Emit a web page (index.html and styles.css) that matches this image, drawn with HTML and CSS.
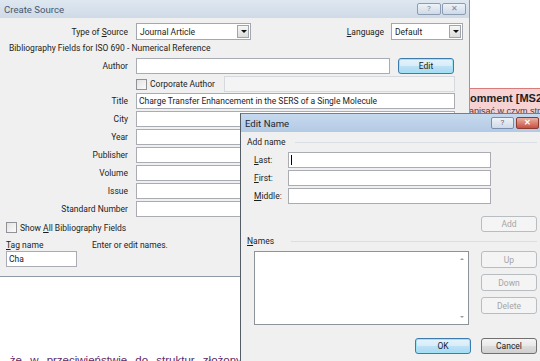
FILE: index.html
```html
<!DOCTYPE html>
<html lang="en">
<head>
  <meta charset="UTF-8">
  <meta name="viewport" content="width=device-width, initial-scale=1.0">
  <title>Create Source</title>
  <link rel="stylesheet" href="styles.css">
</head>
<body>

  <div class="screen">
    <div class="document">
      <div class="comment">
        <div class="comment-head">Comment [MS2]:</div>
        <div class="comment-text">napisać w czym struktura</div>
      </div>
      <p class="doc-line">ę, że w przeciwieństwie do struktur złożonych</p>
    </div>

    <div class="window create-source">
      <div class="titlebar inactive">
        <span class="title">Create Source</span>
        <div class="caption">
          <span class="cap-btn help">?</span>
          <span class="cap-btn close">&#x2715;</span>
        </div>
      </div>

      <div class="win-body">
        <div class="row top-row">
          <span class="field-label">Type of <u>S</u>ource</span>
          <div class="select type-select"><span>Journal Article</span><span class="drop"></span></div>
          <span class="lang-label"><u>L</u>anguage</span>
          <div class="select lang-select"><span>Default</span><span class="drop"></span></div>
        </div>

        <div class="section-title">Bibliography Fields for ISO 690 - Numerical Reference</div>

        <div class="row field-row">
          <span class="field-label">Author</span>
          <input class="text-input author-input" type="text" value="">
          <button class="btn default edit-btn">Edit</button>
        </div>
        <div class="row field-row">
          <span class="field-label"></span>
          <span class="checkbox"></span>
          <span class="check-text">Corporate Author</span>
          <input class="text-input corp-input" type="text" value="" disabled>
        </div>
        <div class="row field-row title-row">
          <span class="field-label">Title</span>
          <input class="text-input wide-input" type="text" value="Charge Transfer Enhancement in the SERS of a Single Molecule">
        </div>
        <div class="row field-row">
          <span class="field-label">City</span>
          <input class="text-input wide-input" type="text" value="">
        </div>
        <div class="row field-row">
          <span class="field-label">Year</span>
          <input class="text-input wide-input" type="text" value="">
        </div>
        <div class="row field-row">
          <span class="field-label">Publisher</span>
          <input class="text-input wide-input" type="text" value="">
        </div>
        <div class="row field-row">
          <span class="field-label">Volume</span>
          <input class="text-input wide-input" type="text" value="">
        </div>
        <div class="row field-row">
          <span class="field-label">Issue</span>
          <input class="text-input wide-input" type="text" value="">
        </div>
        <div class="row field-row">
          <span class="field-label">Standard Number</span>
          <input class="text-input wide-input" type="text" value="">
        </div>

        <div class="row show-all">
          <span class="checkbox"></span>
          <span class="check-text">Show <u>A</u>ll Bibliography Fields</span>
        </div>
        <div class="row tag-labels">
          <span class="tag-label"><u>T</u>ag name</span>
          <span>Enter or edit names.</span>
        </div>
        <input class="text-input tag-input" type="text" value="Cha">
      </div>
    </div>

    <div class="window edit-name">
      <div class="titlebar active">
        <span class="title">Edit Name</span>
        <div class="caption">
          <span class="cap-btn help">?</span>
          <span class="cap-btn close red">&#x2715;</span>
        </div>
      </div>

      <div class="win-body">
        <div class="group-head">Add name</div>
        <div class="name-row">
          <span class="name-label"><u>L</u>ast:</span>
          <div class="text-input name-input"><span class="caret"></span></div>
        </div>
        <div class="name-row">
          <span class="name-label"><u>F</u>irst:</span>
          <div class="text-input name-input"></div>
        </div>
        <div class="name-row">
          <span class="name-label"><u>M</u>iddle:</span>
          <div class="text-input name-input"></div>
        </div>
        <div class="add-row">
          <button class="btn disabled">Add</button>
        </div>

        <div class="group-head names-head"><span><u>N</u>ames</span></div>
        <div class="names-area">
          <div class="names-list">
            <span class="arrow up"></span>
            <span class="arrow down"></span>
          </div>
          <div class="side-btns">
            <button class="btn disabled tall">Up</button>
            <button class="btn disabled tall">Down</button>
            <button class="btn disabled tall">Delete</button>
          </div>
        </div>
        <div class="dialog-btns">
          <button class="btn default">OK</button>
          <button class="btn">Cancel</button>
        </div>
      </div>
    </div>
  </div>

</body>
</html>
```

FILE: styles.css
```css
body {
  margin: 0;
  font-family: Roboto, "Liberation Sans", Arial, sans-serif;
  font-size: 8.5px;
  color: #1c1c1c;
  background-color: #ffffff;
  overflow: hidden;
}

.screen {
  position: relative;
  width: 540px;
  height: 361px;
  overflow: hidden;
  background-color: #ffffff;
}

/* document behind the dialogs */
.comment {
  position: absolute;
  left: 462px;
  top: 88px;
  width: 90px;
  height: 26px;
  background-color: #f6d2d2;
  border-top: 1px solid #d77b7b;
  padding-top: 3px;
  box-sizing: border-box;
  white-space: nowrap;
}

.comment-head {
  font-family: "Liberation Sans", Arial, sans-serif;
  font-weight: bold;
  font-size: 11px;
  line-height: 12px;
  color: #1e1e1e;
}

.comment-text {
  font-family: "Liberation Sans", Arial, sans-serif;
  font-size: 9px;
  line-height: 11px;
  color: #4a3a40;
  margin: 2px 0 0 2px;
}

.doc-line {
  position: absolute;
  left: -8px;
  top: 354px;
  margin: 0;
  white-space: nowrap;
  font-family: "Liberation Sans", Arial, sans-serif;
  font-size: 11.5px;
  word-spacing: 5px;
  color: #5e2a66;
}

/* windows */
.window {
  position: absolute;
  background-color: #f0f0f0;
  box-sizing: border-box;
}

.create-source {
  left: 0;
  top: 0;
  width: 470px;
  height: 277px;
  border-right: 1px solid #8e9aa6;
  border-bottom: 1px solid #8e9aa6;
}

.edit-name {
  left: 240px;
  top: 113px;
  width: 301px;
  height: 260px;
  border-left: 1px solid #545d66;
  border-top: 1px solid #6d7f94;
}

.titlebar {
  display: flex;
  align-items: center;
  justify-content: space-between;
  height: 18px;
  padding-left: 4px;
}

.titlebar.inactive {
  background: linear-gradient(#dfe8f1, #cfdae7);
}

.titlebar.active {
  background: linear-gradient(#c6d9ee, #b3cae5);
}

.titlebar .title {
  font-size: 9.6px;
  color: #46576b;
}

.titlebar.active .title {
  color: #1c2733;
}

.caption {
  display: flex;
  gap: 1px;
  margin-right: 3px;
  align-self: flex-start;
  margin-top: 3px;
}

.edit-name .caption {
  margin-top: 3px;
  margin-right: 2px;
  gap: 2px;
}

.cap-btn {
  width: 24px;
  height: 12px;
  border: 1px solid #8d9db1;
  border-radius: 2px;
  box-sizing: border-box;
  background: linear-gradient(#eef3f8, #cfdae7);
  color: #7d8a99;
  font-size: 8px;
  line-height: 10px;
  text-align: center;
}

.edit-name .cap-btn {
  width: 23px;
  border-color: #7890ad;
  color: #55667a;
}

.cap-btn.red {
  background: linear-gradient(#eab1a4, #c9503f);
  border-color: #8c3b32;
  color: #ffffff;
  font-weight: bold;
}

/* Create Source body */
.row {
  display: flex;
  align-items: center;
}

.top-row {
  margin-top: 5px;
  height: 17px;
}

.field-label {
  width: 128px;
  margin-right: 8px;
  text-align: right;
  flex-shrink: 0;
}

.select {
  display: flex;
  align-items: center;
  justify-content: space-between;
  height: 17px;
  box-sizing: border-box;
  background-color: #ffffff;
  border: 1px solid #a4a8ae;
  padding-left: 3px;
}

.type-select {
  width: 115px;
}

.lang-select {
  width: 72px;
  margin-right: 6px;
}

.lang-label {
  margin-left: auto;
  margin-right: 7px;
}

.drop {
  width: 12px;
  height: 13px;
  margin-right: 1px;
  box-sizing: border-box;
  border: 1px solid #a0a5ab;
  background: linear-gradient(#f7f7f7, #dcdcdc);
  position: relative;
}

.drop::after {
  content: "";
  position: absolute;
  left: 3px;
  top: 4px;
  border-left: 3px solid transparent;
  border-right: 3px solid transparent;
  border-top: 3px solid #111;
}

.section-title {
  margin-top: 3px;
  height: 11px;
  line-height: 11px;
  padding-left: 9px;
}

.field-row {
  margin-top: 2px;
  height: 16px;
}

.section-title + .field-row {
  margin-top: 4px;
}

.title-row {
  margin-top: 1px;
}

.text-input {
  height: 16px;
  box-sizing: border-box;
  border: 1px solid #a9adb3;
  background-color: #ffffff;
  font: inherit;
  color: #1c1c1c;
  padding: 0 2px;
  margin: 0;
  outline: none;
}

.author-input {
  width: 254px;
}

.wide-input {
  width: 319px;
}

.corp-input {
  width: 231px;
  margin-left: auto;
  margin-right: 14px;
  background-color: #f4f4f4;
  border-color: #d6d9dd;
}

.checkbox {
  width: 11px;
  height: 11px;
  box-sizing: border-box;
  border: 1px solid #8f9296;
  background: linear-gradient(135deg, #e3e3e3, #fbfbfb);
  flex-shrink: 0;
}

.check-text {
  margin-left: 3px;
}

.show-all {
  margin-top: 5px;
  margin-left: 6px;
  height: 11px;
}

.tag-labels {
  margin-top: 7px;
  margin-left: 6px;
  height: 10px;
}

.tag-label {
  width: 86px;
}

.tag-input {
  display: block;
  margin: 1px 0 0 6px;
  width: 71px;
}

/* buttons */
.btn {
  font: inherit;
  color: #1c1c1c;
  width: 56px;
  height: 16px;
  padding: 0;
  border: 1px solid #707070;
  border-radius: 3px;
  background: linear-gradient(#f4f4f4 0%, #e8e8e8 50%, #dcdcdc 51%, #d0d0d0 100%);
  box-sizing: border-box;
}

.btn.default {
  border-color: #3d7bad;
  background: linear-gradient(#e6f3fb 0%, #d6ecf9 50%, #bde2f6 51%, #a8d8f3 100%);
  box-shadow: inset 0 0 0 1px #9fe3f5;
}

.btn.disabled {
  color: #a5a5a5;
  border-color: #b8bdc2;
  background: #f4f4f4;
}

.btn.tall {
  height: 17px;
}

.edit-btn {
  margin-left: 8px;
}

/* Edit Name body */
.edit-name .win-body {
  padding: 5px 4px 0 6px;
}

.group-head {
  display: flex;
  align-items: center;
  height: 10px;
  line-height: 10px;
}

.group-head::after {
  content: "";
  flex: 1;
  height: 1px;
  margin-left: 9px;
  background-color: #d9dfe4;
}

.names-head {
  margin-top: 4px;
}

.names-head::after {
  margin-left: 17px;
}

.name-row {
  display: flex;
  align-items: center;
  margin-top: 2px;
  margin-left: 7px;
  height: 16px;
}

.group-head + .name-row {
  margin-top: 5px;
}

.name-label {
  width: 34px;
}

.name-input {
  width: 203px;
  display: flex;
  align-items: center;
}

.caret {
  width: 1px;
  height: 10px;
  background-color: #000;
}

.add-row {
  display: flex;
  justify-content: flex-end;
  margin-top: 12px;
}

.names-area {
  display: flex;
  justify-content: space-between;
  margin-top: 5px;
  margin-left: 7px;
}

.names-list {
  position: relative;
  width: 215px;
  height: 74px;
  box-sizing: border-box;
  border: 1px solid #8e939a;
  background-color: #ffffff;
}

.arrow {
  position: absolute;
  right: 4px;
  border-left: 2px solid transparent;
  border-right: 2px solid transparent;
}

.arrow.up {
  top: 6px;
  border-bottom: 2px solid #9a9a9a;
}

.arrow.down {
  bottom: 6px;
  border-top: 2px solid #9a9a9a;
}

.side-btns {
  display: flex;
  flex-direction: column;
  gap: 6px;
}

.dialog-btns {
  display: flex;
  justify-content: flex-end;
  gap: 10px;
  margin-top: 13px;
}
```
